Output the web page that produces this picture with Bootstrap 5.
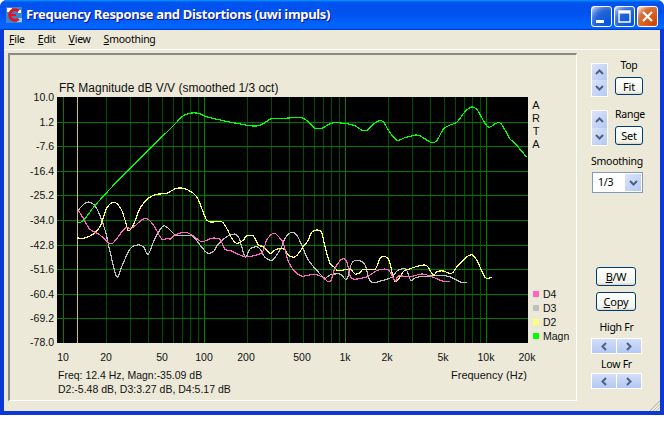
<!DOCTYPE html>
<html lang="en">
<head>
<meta charset="utf-8">
<title>Frequency Response and Distortions</title>
<link rel="stylesheet" href="https://cdn.jsdelivr.net/npm/bootstrap@5.3.0/dist/css/bootstrap.min.css">
<style>
html,body{background:#fff;margin:0;height:421px;overflow:hidden}
.xp-win{width:664px;height:415px;background:#0a37d6;border-radius:7px 7px 0 0;overflow:hidden;font-family:"Noto Sans","DejaVu Sans",sans-serif;font-size:10.5px;letter-spacing:-.25px;color:#000}
.xp-title{height:30px;flex:none;padding:0 6px 0 6px;background:linear-gradient(180deg,#0997ff,#0053ee 8%,#0050ee 40%,#06f 88%,#06f 93%,#005bff 95%,#003dd7 96%,#003dd7)}
.xp-icon{width:16px;height:16px;flex:none;margin-right:4px}
.xp-caption{font-family:"Noto Sans",sans-serif;font-weight:700;font-size:13px;letter-spacing:-.31px;color:#fff;text-shadow:1px 1px 0 #0f1089;white-space:nowrap;flex:1}
.xp-caps{gap:2px;margin-top:3px}
.xp-cap{width:21px;height:21px;border:1px solid #fff;border-radius:3px;background:radial-gradient(circle at 90% 90%,#0054e9 0%,#2263d5 55%,#4479e4 70%,#a3bbec 90%,#fff 100%)}
.xp-cap-close{background:radial-gradient(circle at 90% 90%,#cc4600 0%,#dc6527 55%,#cd7546 70%,#ffccb2 90%,#fff 100%)}
.xp-client{margin:0 4px 4px 4px;background:#ece9d8;min-height:0}
.xp-menu{height:20px;flex:none;border-bottom:1px solid #fff;padding-left:5px;gap:13px;line-height:19px}
.xp-menu .nav-link{padding:0;color:#000;font-size:10.5px}
.xp-main{min-height:0;padding:3px 0 0 4px}
.xp-panel{width:569px;height:348px;flex:none;border-style:solid;border-width:2px 1px 1px 2px;border-color:#8b8a80 #fff #fff #8b8a80}
.xp-panel svg{display:block}
.ct{font-family:"Liberation Sans",sans-serif;font-size:10.5px;letter-spacing:0;fill:#111}
.ct-f{font-size:11px}
.ct-t{font-size:12px}
.xp-side{width:83px;flex:none;padding-left:14px;position:relative}
.spin-v{width:17px;background:#fff;padding:1px;flex:none}
.spin-v>span{flex:1;background:linear-gradient(135deg,#dbe5f9,#b4c8f4)}
.spin-h{width:51px;height:16px;background:#fff;padding:1px;gap:1px}
.spin-h>span{flex:1;background:linear-gradient(180deg,#d3def8,#b4c8f4)}
.xp-lab{height:14px;line-height:14px;white-space:nowrap}
.xp-btn{display:flex;align-items:center;justify-content:center;padding:0;border:1px solid #003c74;border-radius:3px;font-size:11px;letter-spacing:-.25px;line-height:1;color:#000;background:linear-gradient(180deg,#fff,#f3f3ed 85%,#dcd8c8);font-family:inherit}
.xp-btn:hover{color:#000;background:#fff;border-color:#003c74}
.b-s{width:28px;height:18px}
.b-w{width:40px;height:19px;margin-left:5px}
.g1{margin-top:5px;gap:7px}
.g1 .spin-v{height:34px;margin-top:5px}
.g1 .xp-btn{margin-top:5px}
.g2{margin-top:10px;gap:7px}
.g2 .spin-v{height:36px;margin-top:3px}
.g2 .xp-btn{margin-top:5px;height:19px}
.l-sm{margin-top:8px}
.xp-sel{width:51px;height:21px;margin:4px 0 0 1px;border:1px solid #7f9db9;background:#fff;padding:1px;line-height:17px}
.xp-sel-a{width:16px;background:linear-gradient(135deg,#dbe5f9,#b4c8f4)}
.xp-ml{margin-top:74px}
.xp-ml2{margin-top:6px}
.l-hi{margin-top:9px;width:51px}
.l-lo{margin-top:3px;width:51px}
.s-hi{margin-top:4px}
.s-lo{margin-top:2px}
.xp-grip{position:absolute;right:0;bottom:0}
</style>
</head>
<body>
<div class="xp-win d-flex flex-column">
  <div class="xp-title d-flex align-items-center">
    <svg class="xp-icon" viewBox="0 0 16 16"><rect width="16" height="16" fill="#3a86c8"/><rect x="1" y="1" width="5" height="4" fill="#fff"/><rect x="11" y="11" width="5" height="4" fill="#8fd0e8"/><rect x="12" y="3" width="3" height="3" fill="#fff"/><path d="M12.5 4.2A5.2 5.2 0 1 0 12.5 11.8" fill="none" stroke="#e8101c" stroke-width="3"/><path d="M5 8h5" stroke="#e8101c" stroke-width="2"/></svg>
    <div class="xp-caption">Frequency Response and Distortions (uwi impuls)</div>
    <div class="xp-caps d-flex">
      <div class="xp-cap"><svg width="19" height="19" viewBox="0 0 19 19"><rect x="4" y="13" width="8" height="3" fill="#fff"/></svg></div>
      <div class="xp-cap"><svg width="19" height="19" viewBox="0 0 19 19"><path d="M4 4h11v11H4zM4 5.5h11" fill="none" stroke="#fff" stroke-width="1.4"/><rect x="4" y="4" width="11" height="2.4" fill="#fff"/></svg></div>
      <div class="xp-cap xp-cap-close"><svg width="19" height="19" viewBox="0 0 19 19"><path d="M5 5l9 9M14 5l-9 9" stroke="#fff" stroke-width="2.2"/></svg></div>
    </div>
  </div>
  <div class="xp-client flex-grow-1 d-flex flex-column">
    <ul class="nav xp-menu">
      <li class="nav-item"><a class="nav-link" href="#"><u>F</u>ile</a></li>
      <li class="nav-item"><a class="nav-link" href="#"><u>E</u>dit</a></li>
      <li class="nav-item"><a class="nav-link" href="#"><u>V</u>iew</a></li>
      <li class="nav-item"><a class="nav-link" href="#"><u>S</u>moothing</a></li>
    </ul>
    <div class="xp-main d-flex flex-grow-1">
      <div class="xp-panel">
        <svg id="chart" width="566" height="345" viewBox="10 55 566 345">
          <rect x="57" y="97" width="471" height="246" fill="#000"/>
          <g id="grid" shape-rendering="crispEdges"></g>
          <g id="curves" fill="none" stroke-width="1.2" shape-rendering="crispEdges"></g>
          <text class="ct ct-t" x="59" y="92">FR Magnitude dB V/V (smoothed 1/3 oct)</text>
          <g text-anchor="end">
            <text class="ct" x="54" y="101">10.0</text>
            <text class="ct" x="54" y="126">1.2</text>
            <text class="ct" x="54" y="150">-7.6</text>
            <text class="ct" x="54" y="175">-16.4</text>
            <text class="ct" x="54" y="199">-25.2</text>
            <text class="ct" x="54" y="224">-34.0</text>
            <text class="ct" x="54" y="249">-42.8</text>
            <text class="ct" x="54" y="273">-51.6</text>
            <text class="ct" x="54" y="298">-60.4</text>
            <text class="ct" x="54" y="322">-69.2</text>
            <text class="ct" x="54" y="346">-78.0</text>
          </g>
          <g text-anchor="middle">
            <text class="ct" x="63" y="361">10</text>
            <text class="ct" x="106" y="361">20</text>
            <text class="ct" x="162" y="361">50</text>
            <text class="ct" x="204" y="361">100</text>
            <text class="ct" x="246" y="361">200</text>
            <text class="ct" x="302" y="361">500</text>
            <text class="ct" x="345" y="361">1k</text>
            <text class="ct" x="387" y="361">2k</text>
            <text class="ct" x="443" y="361">5k</text>
            <text class="ct" x="486" y="361">10k</text>
            <text class="ct" x="527" y="361">20k</text>
            <text class="ct ct-f" x="536" y="109">A</text>
            <text class="ct ct-f" x="536" y="122">R</text>
            <text class="ct ct-f" x="536" y="135">T</text>
            <text class="ct ct-f" x="536" y="148">A</text>
          </g>
          <text class="ct" x="58" y="379">Freq: 12.4 Hz, Magn:-35.09 dB</text>
          <text class="ct" x="58" y="393">D2:-5.48 dB, D3:3.27 dB, D4:5.17 dB</text>
          <text class="ct ct-f" x="451" y="379">Frequency (Hz)</text>
          <rect x="533" y="291" width="6" height="6" fill="#ff66c0"/><text class="ct" x="543" y="298">D4</text>
          <rect x="533" y="305" width="6" height="6" fill="#c0c0c0"/><text class="ct" x="543" y="312">D3</text>
          <rect x="533" y="319" width="6" height="6" fill="#ffff80"/><text class="ct" x="543" y="326">D2</text>
          <rect x="533" y="333" width="6" height="6" fill="#00ff00"/><text class="ct" x="543" y="340">Magn</text>
        </svg>
      </div>
      <div class="xp-side flex-grow-1 d-flex flex-column">
        <div class="g1 d-flex">
          <div class="spin-v d-flex flex-column"><span class="d-flex align-items-center justify-content-center"><svg width="9" height="6" viewBox="0 0 9 6"><path d="M1 5l3.5-3.5L8 5" fill="none" stroke="#4d6185" stroke-width="2"/></svg></span><span class="d-flex align-items-center justify-content-center"><svg width="9" height="6" viewBox="0 0 9 6"><path d="M1 1l3.5 3.5L8 1" fill="none" stroke="#4d6185" stroke-width="2"/></svg></span></div>
          <div class="d-flex flex-column"><div class="xp-lab text-center">Top</div><button class="xp-btn b-s">Fit</button></div>
        </div>
        <div class="g2 d-flex">
          <div class="spin-v d-flex flex-column"><span class="d-flex align-items-center justify-content-center"><svg width="9" height="6" viewBox="0 0 9 6"><path d="M1 5l3.5-3.5L8 5" fill="none" stroke="#4d6185" stroke-width="2"/></svg></span><span class="d-flex align-items-center justify-content-center"><svg width="9" height="6" viewBox="0 0 9 6"><path d="M1 1l3.5 3.5L8 1" fill="none" stroke="#4d6185" stroke-width="2"/></svg></span></div>
          <div class="d-flex flex-column"><div class="xp-lab text-center">Range</div><button class="xp-btn b-s">Set</button></div>
        </div>
        <div class="xp-lab l-sm">Smoothing</div>
        <div class="xp-sel d-flex justify-content-between"><span class="ps-1">1/3</span><span class="xp-sel-a d-flex align-items-center justify-content-center"><svg width="9" height="6" viewBox="0 0 9 6"><path d="M1 1l3.5 3.5L8 1" fill="none" stroke="#4d6185" stroke-width="2"/></svg></span></div>
        <button class="xp-btn b-w xp-ml"><span><u>B</u>/W</span></button>
        <button class="xp-btn b-w xp-ml2"><span><u>C</u>opy</span></button>
        <div class="xp-lab l-hi text-center">High Fr</div>
        <div class="spin-h s-hi d-flex"><span class="d-flex align-items-center justify-content-center"><svg width="6" height="9" viewBox="0 0 6 9"><path d="M5 1L1.5 4.5 5 8" fill="none" stroke="#4d6185" stroke-width="2"/></svg></span><span class="d-flex align-items-center justify-content-center"><svg width="6" height="9" viewBox="0 0 6 9"><path d="M1 1l3.5 3.5L1 8" fill="none" stroke="#4d6185" stroke-width="2"/></svg></span></div>
        <div class="xp-lab l-lo text-center">Low Fr</div>
        <div class="spin-h s-lo d-flex"><span class="d-flex align-items-center justify-content-center"><svg width="6" height="9" viewBox="0 0 6 9"><path d="M5 1L1.5 4.5 5 8" fill="none" stroke="#4d6185" stroke-width="2"/></svg></span><span class="d-flex align-items-center justify-content-center"><svg width="6" height="9" viewBox="0 0 6 9"><path d="M1 1l3.5 3.5L1 8" fill="none" stroke="#4d6185" stroke-width="2"/></svg></span></div>
        <svg class="xp-grip" width="11" height="11" viewBox="0 0 11 11"><path d="M11 1L1 11M11 4L4 11M11 7L7 11" stroke="#c2bfae" stroke-width="1.4"/><path d="M11 2.5L2.5 11M11 5.5L5.5 11M11 8.5L8.5 11" stroke="#fff" stroke-width="1"/></svg>
      </div>
    </div>
  </div>
</div>
<script>
(function(){
var NS='http://www.w3.org/2000/svg';
function el(p,a){var e=document.createElementNS(NS,p.t);for(var k in a)e.setAttribute(k,a[k]);p.g.appendChild(e);}
var grid=document.getElementById('grid');
var fs=[10,20,30,40,50,60,70,80,90,100,200,300,400,500,600,700,800,900,1000,2000,3000,4000,5000,6000,7000,8000,9000,10000];
fs.forEach(function(f){
  var x=Math.floor(63.6+141*Math.log10(f/10))+.5;
  var major=(f==10||f==100||f==1000||f==10000);
  el({t:'line',g:grid},{x1:x,x2:x,y1:97,y2:343,stroke:major?'#008000':'#005000'});
});
for(var i=1;i<10;i++){
  var y=Math.floor(97.5+24.6*i)+.5;
  el({t:'line',g:grid},{x1:57,x2:528,y1:y,y2:y,stroke:'#007800'});
}
el({t:'line',g:grid},{x1:77.5,x2:77.5,y1:97,y2:343,stroke:'#d8c838'});
var curves=[
['#c0c0c0',[78.3,210,85,203.3,90,202.3,96.7,208.3,105,230,110,251.7,116.7,276.7,121.7,266.7,130,249,137.3,245,143.3,246.7,148.3,254,155,238.3,163.3,226,170,230,176.7,235.7,191.7,235.7,200,245,206.7,252.7,213.3,251.7,218.3,244,230,235,238.3,236.7,245,256.7,250,249,258.3,247.3,265,257.3,272.7,260,281.7,246.7,285,238.3,291.7,232.3,296.7,235,301.7,245,308.3,260,320,274,325,278.3,330,275,340,274,346.7,279.3,351.7,263.3,358.3,260.3,365,265,370.7,281.7,381.7,280.7,391.7,277.3,395,273.3,398.3,270,406,269.3,410.7,280,416.7,277.3,430,276,446.7,276,456.7,280,461.7,282.3,466.7,282.3]],
['#ffff66',[77.3,238,85,238,93.3,234,100,226.7,106.7,208.3,114.3,202.3,120.7,208.3,125,220,128.3,230.7,133.3,225,140,208.3,148.3,198.3,156.7,194.3,166.7,193.3,176.7,188.3,186.7,189.3,196.7,196.7,201.7,208.3,206.7,220,211.7,222,221.7,221.7,226.7,228.3,231.7,238.3,236.7,243.3,243.3,240,246.7,236,253.3,236,258.3,245,263.3,246.7,270,253.3,275,250,280,248.3,285,250,288.3,255,293.3,257.3,297.3,255,303.3,246.7,308.3,240,311.7,232.3,316.7,230,321.7,232.7,325,246.7,330,263.3,335,267.7,338.3,270.7,350,269.3,355,274,360,272.7,363.3,269.3,375,269.3,380,258.3,386.7,257.3,390,263.3,395,281.7,403.3,271.7,408.3,269.3,420,265.7,426.7,265.7,433.3,275,436.7,271.7,443.3,271,451.7,273.3,458.3,265,470,255,476.7,260,485,277.3,491.7,277.3]],
['#ff66c4',[78.3,210,83.3,218.3,90,229.3,100,235,108.3,242.7,113.3,242.7,125,228.3,131.7,228.3,145,218.3,153.3,225,161.7,239,166.7,238.3,170.7,239,175,235,185,232.3,193.3,235.7,201.7,241.7,211.7,238.3,220,239.3,225,249.3,231.7,251,238.3,254.3,246.7,256.7,261.7,252.7,266.7,240,274,233.3,280,238.3,283.3,243.3,288.3,261.7,295,271.7,301.7,276,308.3,275.3,315,274.3,321.7,276.7,330,281.7,335,268.3,341.7,259.3,346.7,261.7,351.7,278.3,365,277.3,370,275,378.3,270,388.3,270,395,281,398.3,276,410,276.7,421.7,274,430,276,443.3,281.3,450,281.3]],
['#00ff00',[78,223,84,220,96,204.3,128.3,170,173.3,125.7,181.7,116.7,190,113.3,198.3,113.3,206.7,116.7,220,120,235,123,256.7,126,270,119.3,273.3,118.3,285,118.3,299.3,117.3,305,119.3,310,123.3,315,128.3,321.7,128.3,330,123.7,335,122.7,346.7,123.7,355,125.7,361.7,130,367.3,130,373.3,124.3,378.3,121,383.3,121.7,388.3,130,396.7,140,405,137.7,416.7,135,423.3,137.7,430.7,142.3,436.7,140.7,443.3,129.3,450,125,456.7,122.3,465,111.7,471.7,107,477.3,110,485,123.3,489.3,127.3,496,123.3,500.7,123.3,505,130,510,139,515,143.3,526.7,157.3]]
];
var g=document.getElementById('curves');
curves.forEach(function(c){
  var a=c[1],n=a.length/2,P=function(i){i=Math.max(0,Math.min(n-1,i));return [a[2*i],a[2*i+1]];};
  var d='M'+a[0]+' '+a[1];
  for(var i=0;i<n-1;i++){
    var p0=P(i-1),p1=P(i),p2=P(i+1),p3=P(i+2);
    d+='C'+(p1[0]+(p2[0]-p0[0])/6).toFixed(1)+' '+(p1[1]+(p2[1]-p0[1])/6).toFixed(1)+' '+(p2[0]-(p3[0]-p1[0])/6).toFixed(1)+' '+(p2[1]-(p3[1]-p1[1])/6).toFixed(1)+' '+p2[0]+' '+p2[1];
  }
  el({t:'path',g:g},{d:d,stroke:c[0]});
});
})();
</script>
<script src="https://cdn.jsdelivr.net/npm/bootstrap@5.3.0/dist/js/bootstrap.bundle.min.js"></script>
</body>
</html>
